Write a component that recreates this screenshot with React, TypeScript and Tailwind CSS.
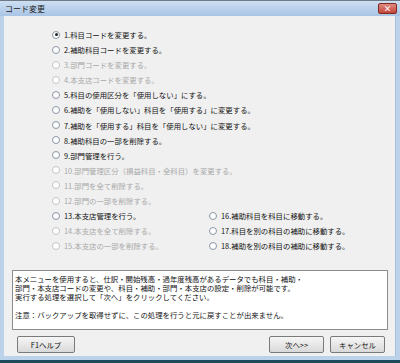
import React from "react";

type Item = { label: string; disabled?: boolean; checked?: boolean };

const leftItems: Item[] = [
  { label: "1.科目コードを変更する。", checked: true },
  { label: "2.補助科目コードを変更する。" },
  { label: "3.部門コードを変更する。", disabled: true },
  { label: "4.本支店コードを変更する。", disabled: true },
  { label: "5.科目の使用区分を「使用しない」にする。" },
  { label: "6.補助を「使用しない」科目を「使用する」に変更する。" },
  { label: "7.補助を「使用する」科目を「使用しない」に変更する。" },
  { label: "8.補助科目の一部を削除する。" },
  { label: "9.部門管理を行う。" },
  { label: "10.部門管理区分（損益科目・全科目）を変更する。", disabled: true },
  { label: "11.部門を全て削除する。", disabled: true },
  { label: "12.部門の一部を削除する。", disabled: true },
];

const bottomLeft: Item[] = [
  { label: "13.本支店管理を行う。" },
  { label: "14.本支店を全て削除する。", disabled: true },
  { label: "15.本支店の一部を削除する。", disabled: true },
];

const bottomRight: Item[] = [
  { label: "16.補助科目を科目に移動する。" },
  { label: "17.科目を別の科目の補助に移動する。" },
  { label: "18.補助を別の科目の補助に移動する。" },
];

function Radio({ item }: { item: Item }) {
  return (
    <div className="h-[15.1px] flex items-center gap-[4px] whitespace-nowrap">
      <span
        className={`w-[8px] h-[8px] rounded-full border bg-white flex items-center justify-center shrink-0 ${
          item.disabled ? "border-[#c4c4c4]" : "border-[#8a96a4]"
        }`}
      >
        {item.checked && <span className="w-[3px] h-[3px] rounded-full bg-[#222]" />}
      </span>
      <span className={item.disabled ? "text-[#a8a8a8]" : "text-[#111]"}>{item.label}</span>
    </div>
  );
}

function Button({ label, className = "" }: { label: string; className?: string }) {
  return (
    <button
      className={`h-[17px] border border-[#7a7a7a] rounded-[2px] bg-gradient-to-b from-[#f6f6f6] to-[#d9d9d9] text-[7.4px] text-[#111] flex items-center justify-center ${className}`}
    >
      {label}
    </button>
  );
}

export default function App() {
  return (
    <div className="w-[400px] h-[363px] flex flex-col bg-[#bcd2ea] font-['Noto_Sans_CJK_JP',sans-serif] text-[7.4px] overflow-hidden">
      {/* Title bar */}
      <div className="h-[16px] border-t border-[#707a86] bg-gradient-to-b from-[#cddff2] to-[#a9c4e4] flex items-center justify-between pl-[5px] pr-[3px]">
        <span className="text-[8px] text-[#1a1a1a]">コード変更</span>
        <span className="w-[19px] h-[11px] rounded-[2px] border border-[#7e2a22] bg-gradient-to-b from-[#e08a80] to-[#c2433a] flex items-center justify-center text-white text-[8px] font-bold leading-none">
          ×
        </span>
      </div>

      {/* Client area */}
      <div className="flex-1 mx-[4px] bg-[#f0f0f0] flex flex-col pt-[11px] pb-[3px] border-r border-[#a9c0da]">
        <div className="pl-[48px] flex flex-col">
          {leftItems.map((it) => (
            <Radio key={it.label} item={it} />
          ))}
          <div className="flex">
            <div className="w-[157px] flex flex-col">
              {bottomLeft.map((it) => (
                <Radio key={it.label} item={it} />
              ))}
            </div>
            <div className="flex flex-col">
              {bottomRight.map((it) => (
                <Radio key={it.label} item={it} />
              ))}
            </div>
          </div>
        </div>

        <div className="mt-[16.5px] ml-[8px] mr-[7px] h-[60px] bg-white border border-[#8c8c8c] px-[2px] pt-[3px] leading-[9px] text-[#111] whitespace-nowrap">
          <div>本メニューを使用すると、仕訳・開始残高・過年度残高があるデータでも科目・補助・</div>
          <div>部門・本支店コードの変更や、科目・補助・部門・本支店の設定・削除が可能です。</div>
          <div>実行する処理を選択して「次へ」をクリックしてください。</div>
          <div>&nbsp;</div>
          <div>注意：バックアップを取得せずに、この処理を行うと元に戻すことが出来ません。</div>
        </div>

        <div className="mt-[6px] flex items-center pl-[13px] pr-[10px]">
          <Button label="F1ヘルプ" className="w-[58px]" />
          <div className="flex-1" />
          <Button label="次へ>>" className="w-[55px]" />
          <Button label="キャンセル" className="w-[55px] ml-[6px]" />
        </div>
      </div>

      <div className="h-[4px]" />
      <div className="h-[3px] bg-[#1d4a5c]" />
    </div>
  );
}
